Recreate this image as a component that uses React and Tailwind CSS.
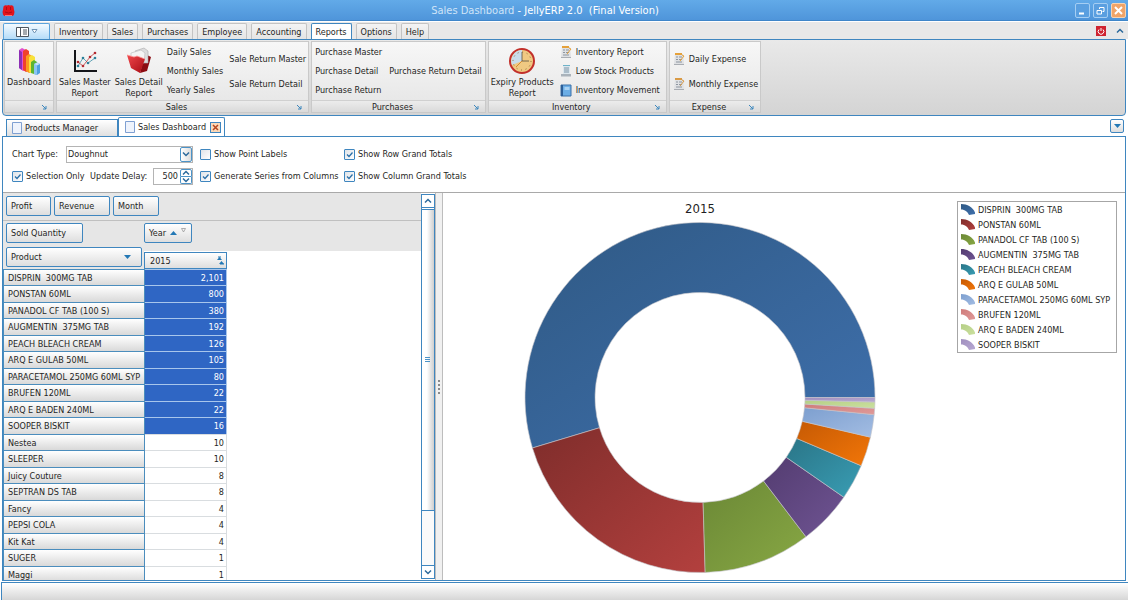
import { useState } from "react";
import clsx from "clsx";

const ribbonTabs = ["Inventory", "Sales", "Purchases", "Employee", "Accounting", "Reports", "Options", "Help"];

const products = [
    { name: "DISPRIN  300MG TAB", qty: 2101, from: "#2f5984", to: "#3f70ad" },
    { name: "PONSTAN 60ML", qty: 800, from: "#7f2d2b", to: "#b3403e" },
    { name: "PANADOL CF TAB (100 S)", qty: 380, from: "#6b8836", to: "#88a844" },
    { name: "AUGMENTIN  375MG TAB", qty: 192, from: "#533c70", to: "#6f5493" },
    { name: "PEACH BLEACH CREAM", qty: 126, from: "#2a7587", to: "#399db4" },
    { name: "ARQ E GULAB 50ML", qty: 105, from: "#c65a04", to: "#f27608" },
    { name: "PARACETAMOL 250MG 60ML SYP", qty: 80, from: "#7d9fcf", to: "#a3bde3" },
    { name: "BRUFEN 120ML", qty: 22, from: "#cf7c7b", to: "#e09a99" },
    { name: "ARQ E BADEN 240ML", qty: 22, from: "#b5cf86", to: "#cbe09f" },
    { name: "SOOPER BISKIT", qty: 16, from: "#a08fbf", to: "#b8a9d2" },
];

const otherProducts = [
    { name: "Nestea", qty: 10 },
    { name: "SLEEPER", qty: 10 },
    { name: "Juicy Couture", qty: 8 },
    { name: "SEPTRAN DS TAB", qty: 8 },
    { name: "Fancy", qty: 4 },
    { name: "PEPSI COLA", qty: 4 },
    { name: "Kit Kat", qty: 4 },
    { name: "SUGER", qty: 1 },
    { name: "Maggi", qty: 1 },
];

/* ---------- icons ---------- */

function JellyIcon() {
    return (
        <svg width="13" height="13" viewBox="0 0 13 13">
            <path d="M1.500 2.500 Q3 .5 5 1.500 Q6.500 .5 8 1.500 Q10 .5 11.500 2.500 L12 6 Q13 8 12 10.500 Q11 12.500 9 12 H4 Q2 12.500 1 10.500 Q0 8 1 6 Z" fill="#e3141c" />
            <path d="M4.500 3 V6 M8.500 3 V6 M3 8 Q6.500 10 10 8" stroke="#b00b14" fill="none" />
            <path d="M3 11.500 H10" stroke="#ff7474" />
        </svg>
    );
}

function DashboardIcon() {
    return (
        <svg width="24" height="28" viewBox="0 0 24 28">
            <path d="M2 3 L5 1 L9 3 L9 23 L6 24 L2 21 Z" fill="#e04fd0" />
            <path d="M2 3 L5 5 L5 23 L2 21 Z" fill="#8d2fb5" />
            <path d="M6 4 L9 2 L12 4 V24 L9 25 L6 23 Z" fill="#f0412c" />
            <path d="M9 9 L12 7 L15 9 V25 L12 26 L9 24 Z" fill="#fb9a1e" />
            <path d="M12 10 L15 8 L18 10 V26 L14 26 L12 25 Z" fill="#f8e13a" />
            <path d="M14 15 L17 13 L20 15 V26 L17 27 L14 26 Z" fill="#5cb531" />
            <path d="M17 17 L20 15.500 L23 17 V26 L20 28 L17 27 Z" fill="#4f9fe0" />
            <path d="M17 17 L20 18.500 V28 L17 27 Z" fill="#8cc6f2" />
            <path d="M17 17 L20 15.500 L23 17 L20 18.500 Z" fill="#c5e3fa" />
        </svg>
    );
}

function LineChartIcon() {
    return (
        <svg width="26" height="26" viewBox="0 0 26 26" fill="none">
            <path d="M3 2 V23 H25" stroke="#15161a" strokeWidth="2" />
            <path d="M6 18 L11 10 L16 15 L23 10" stroke="#3d8fa6" strokeWidth=".8" />
            <path d="M6 14 L11 18 L18 9 L23 5" stroke="#c0393b" strokeWidth=".8" />
            <g fill="#2a8099">
                <circle cx="6" cy="18" r="1.300" /><circle cx="11" cy="10" r="1.300" /><circle cx="16" cy="15" r="1.300" /><circle cx="23" cy="10" r="1.300" />
            </g>
            <g fill="#b52a30">
                <circle cx="6" cy="14" r="1.300" /><circle cx="11" cy="18" r="1.300" /><circle cx="18" cy="9" r="1.300" /><circle cx="23" cy="5" r="1.300" />
            </g>
        </svg>
    );
}

function FolderIcon() {
    return (
        <svg width="28" height="28" viewBox="0 0 28 28">
            <defs>
                <linearGradient id="folder" x1="0" y1="0" x2="1" y2="1">
                    <stop offset="0" stopColor="#f0484c" />
                    <stop offset="1" stopColor="#a80c14" />
                </linearGradient>
            </defs>
            <path d="M20 7 L26 10 L22 24 L15 26 Z" fill="#8c0b12" />
            <path d="M10 4 L19 1 L23 4 L23 16 L18 16 Z" fill="#dcdcdd" stroke="#a9a9ab" strokeWidth=".6" />
            <path d="M6 6 L16 3 L20 6 L19 16 L6 12 Z" fill="#f4f4f4" stroke="#b9b9bb" strokeWidth=".6" />
            <path d="M2 8 L9 10 L12 9 L20 12 L15 26 L6 21 Z" fill="url(#folder)" />
            <path d="M2 8 L9 10 L12 9 L20 12" stroke="#ff9a9a" strokeWidth=".8" fill="none" />
        </svg>
    );
}

function ClockIcon() {
    return (
        <svg width="28" height="28" viewBox="0 0 28 28">
            <circle cx="14" cy="14" r="12" fill="#f0c982" stroke="#c2302b" strokeWidth="2" />
            <path d="M14 14 V3 A11 11 0 0 0 4 18 Z" fill="#c9dcea" />
            <circle cx="14" cy="14" r="9" fill="none" stroke="#8c6a3a" strokeDasharray="1 3.700" />
            <path d="M14 5 V14 H21" stroke="#59503f" strokeWidth=".8" fill="none" />
            <path d="M14 14 L8 20" stroke="#d98a2b" />
        </svg>
    );
}

function ReportIcon({ color = "#e5a13a" }) {
    return (
        <svg width="12" height="13" viewBox="0 0 12 13">
            <path d="M2 2 H10 L11 12 H1 Z" fill="#dfe1e4" />
            <path d="M2 1 H9 V3 H2 Z" fill={color} />
            <path d="M3 5 H5 M6 5 H9 M3 7.500 H5 M6 7.500 H9 M3 10 H9" stroke="#8d959f" />
            <path d="M9 3 L11 4 L7 9" stroke={color} fill="none" />
            <path d="M1 12.500 H11" stroke="#a9adb3" />
        </svg>
    );
}

function StockIcon() {
    return (
        <svg width="12" height="13" viewBox="0 0 12 13">
            <path d="M3 1 H10 V10 H3 Z" fill="#dce7ee" />
            <path d="M3 1.500 H10" stroke="#6fb3c9" />
            <path d="M4 4 H9 M4 6 H9 M4 8 H9" stroke="#7c93a5" />
            <path d="M1 10 H11 V12.500 H1 Z" fill="#aab3bb" />
        </svg>
    );
}

function BookIcon() {
    return (
        <svg width="12" height="13" viewBox="0 0 12 13">
            <path d="M1 1 H11 V12 H1 Z" fill="#6caee6" stroke="#3a70a8" />
            <path d="M1 1 H3 V12 H1 Z" fill="#2d5f98" />
            <path d="M4.500 3 H9.500 V6 H4.500 Z" fill="#a9d2f3" />
        </svg>
    );
}

function PageIcon() {
    return (
        <svg width="10" height="12" viewBox="0 0 10 12">
            <path d="M.5 .5 H9.500 V11.500 H.5 Z" fill="#eef3fc" stroke="#7fa0d2" />
        </svg>
    );
}

function Chevron({ up = false }) {
    return (
        <svg width="8" height="6" viewBox="0 0 8 6" className="shrink-0">
            <path d={up ? "M1 4.500 L4 1.500 L7 4.500" : "M1 1.500 L4 4.500 L7 1.500"} stroke="#2c6a9c" strokeWidth="1.500" fill="none" />
        </svg>
    );
}

function Triangle({ up = false }) {
    return (
        <svg width="7" height="4" viewBox="0 0 7 4" className="shrink-0">
            <path d={up ? "M0 4 L3.500 0 L7 4 Z" : "M0 0 L3.500 4 L7 0 Z"} fill="#2378b5" />
        </svg>
    );
}

/* ---------- ribbon ---------- */

function RibbonGroup({ title, className, children }) {
    return (
        <section className="flex flex-col shrink-0 border border-[#c9c9c9] bg-linear-to-b from-[#f7f7f7] to-[#e5e5e5]">
            <div className={clsx("flex h-[58px]", className)}>{children}</div>
            <div className="flex h-3 items-center border-t border-[#d0d0d0] bg-linear-to-b from-[#ececec] to-[#dadada]">
                <h2 className="flex-1 text-center">{title}</h2>
                <button aria-label="More options" className="w-3">
                    <svg width="6" height="6" viewBox="0 0 6 6">
                        <path d="M1 1 L5 5 M5 2 V5 H2" stroke="#3b86bd" fill="none" />
                    </svg>
                </button>
            </div>
        </section>
    );
}

function LargeButton({ icon, children }) {
    return (
        <button className="flex flex-col items-center pt-[3px]">
            <span className="flex h-8 items-center">{icon}</span>
            <span className="leading-[11px] whitespace-pre-line">{children}</span>
        </button>
    );
}

function SmallButton({ icon, children }) {
    return (
        <button className="flex items-center gap-1 text-left whitespace-nowrap">
            {icon}
            {children}
        </button>
    );
}

function Ribbon() {
    return (
        <div className="flex gap-0.5 h-[77px] mx-0.5 px-px pt-px pb-0.5 border border-[#3f86bf] rounded-b-sm bg-linear-to-b from-[#e9e9e9] to-[#d4d4d4]">
            <RibbonGroup className="px-0.5">
                <LargeButton icon={<DashboardIcon />}>Dashboard</LargeButton>
            </RibbonGroup>

            <RibbonGroup title="Sales" className="px-0.5 gap-1">
                <LargeButton icon={<LineChartIcon />}>{"Sales Master\nReport"}</LargeButton>
                <LargeButton icon={<FolderIcon />}>{"Sales Detail\nReport"}</LargeButton>
                <div className="grid grid-rows-3">
                    <SmallButton>Daily Sales</SmallButton>
                    <SmallButton>Monthly Sales</SmallButton>
                    <SmallButton>Yearly Sales</SmallButton>
                </div>
                <div className="grid grid-rows-2 py-1 pl-0.5">
                    <SmallButton>Sale Return Master</SmallButton>
                    <SmallButton>Sale Return Detail</SmallButton>
                </div>
            </RibbonGroup>

            <RibbonGroup title="Purchases" className="px-[3px] gap-[7px]">
                <div className="grid grid-rows-3">
                    <SmallButton>Purchase Master</SmallButton>
                    <SmallButton>Purchase Detail</SmallButton>
                    <SmallButton>Purchase Return</SmallButton>
                </div>
                <div className="flex items-center">
                    <SmallButton>Purchase Return Detail</SmallButton>
                </div>
            </RibbonGroup>

            <RibbonGroup title="Inventory" className="pl-0.5 pr-1.5 gap-1.5">
                <LargeButton icon={<ClockIcon />}>{"Expiry Products\nReport"}</LargeButton>
                <div className="grid grid-rows-3">
                    <SmallButton icon={<ReportIcon />}>Inventory Report</SmallButton>
                    <SmallButton icon={<StockIcon />}>Low Stock Products</SmallButton>
                    <SmallButton icon={<BookIcon />}>Inventory Movement</SmallButton>
                </div>
            </RibbonGroup>

            <RibbonGroup title="Expense" className="pl-[3px] pr-0.5">
                <div className="grid grid-rows-2 py-1">
                    <SmallButton icon={<ReportIcon />}>Daily Expense</SmallButton>
                    <SmallButton icon={<ReportIcon color="#d99a45" />}>Monthly Expense</SmallButton>
                </div>
            </RibbonGroup>
        </div>
    );
}

/* ---------- options ---------- */

function CheckOption({ label, defaultChecked }) {
    return (
        <label className="flex items-center gap-[3px] whitespace-nowrap">
            <span className="grid shrink-0">
                <input
                    type="checkbox"
                    defaultChecked={defaultChecked}
                    className="peer col-start-1 row-start-1 appearance-none size-[11px] border border-[#3f86bf] rounded-[1px] bg-linear-to-br from-[#dfe3e8] to-white"
                />
                <svg viewBox="0 0 11 11" className="col-start-1 row-start-1 size-[11px] pointer-events-none invisible peer-checked:visible">
                    <path d="M3 5.500 L5 7.500 L8.500 3.500" stroke="#2a6fa8" strokeWidth="1.300" fill="none" />
                </svg>
            </span>
            {label}
        </label>
    );
}

function Options() {

    const [delay, setDelay] = useState(500);

    return (
        <div className="grid shrink-0 grid-cols-[188px_144px_auto] auto-rows-[22px] items-center justify-start pl-[9px] pt-1.5 pb-[5px] border-b border-[#a9a9a9]">
            <div className="flex items-center justify-between pr-[7px]">
                <label htmlFor="chart-type">Chart Type:</label>
                <div className="flex h-[17px] w-[127px] border border-[#b4b4b4]">
                    <select id="chart-type" className="appearance-none flex-1 pl-px bg-white outline-none">
                        <option>Doughnut</option>
                        <option>Pie</option>
                        <option>Bar</option>
                    </select>
                    <span className="flex w-3 items-center justify-center border border-[#4b93c8] rounded-xs bg-linear-to-r from-white to-[#dcdcdc] pointer-events-none">
                        <Chevron />
                    </span>
                </div>
            </div>
            <CheckOption label="Show Point Labels" />
            <CheckOption label="Show Row Grand Totals" defaultChecked />

            <div className="flex items-center justify-between pr-[7px]">
                <CheckOption label="Selection Only" defaultChecked />
                <label htmlFor="delay">Update Delay:</label>
                <div className="flex h-[17px] w-10 border border-[#b4b4b4]">
                    <input
                        id="delay"
                        value={delay}
                        onChange={(e) => setDelay(Number(e.target.value) || 0)}
                        className="w-0 flex-1 pr-0.5 text-right outline-none"
                    />
                    <div className="flex flex-col w-3">
                        <button aria-label="Increase" onClick={() => setDelay(delay + 100)} className="flex flex-1 items-center justify-center border border-[#4b93c8] rounded-t-xs">
                            <Chevron up />
                        </button>
                        <button aria-label="Decrease" onClick={() => setDelay(delay - 100)} className="flex flex-1 items-center justify-center border border-t-0 border-[#4b93c8] rounded-b-xs">
                            <Chevron />
                        </button>
                    </div>
                </div>
            </div>
            <CheckOption label="Generate Series from Columns" defaultChecked />
            <CheckOption label="Show Column Grand Totals" defaultChecked />
        </div>
    );
}

/* ---------- pivot grid ---------- */

function FieldButton({ className, children }) {
    return (
        <button className={clsx("flex h-5 items-center pl-1 border border-[#3f86bf] rounded-xs bg-linear-to-b from-white to-[#dedede]", className)}>
            {children}
        </button>
    );
}

function PivotGrid() {

    const rows = [...products, ...otherProducts];

    return (
        <div className="flex flex-1 min-w-0 flex-col overflow-hidden">
            <div className="flex shrink-0 gap-[3px] pt-[3px] pb-1 pl-[3px] bg-[#e6e6e6] border-b border-[#c0c0c0]">
                <FieldButton className="w-[45px]">Profit</FieldButton>
                <FieldButton className="w-14">Revenue</FieldButton>
                <FieldButton className="w-[46px]">Month</FieldButton>
            </div>

            <div className="flex shrink-0 bg-[#e6e6e6]">
                <div className="w-[141px] py-0.5 pl-[3px] pr-0.5">
                    <FieldButton className="w-[77px]">Sold Quantity</FieldButton>
                    <FieldButton className="w-full mt-1 justify-between pr-2.5">
                        Product
                        <Triangle />
                    </FieldButton>
                </div>
                <div className="flex flex-1 flex-col pt-0.5">
                    <FieldButton className="w-12 gap-1">
                        Year
                        <Triangle up />
                        <svg width="5" height="10" viewBox="0 0 5 10">
                            <path d="M.5 .5 H4.500 L2.500 4 Z" fill="none" stroke="#9a9a9a" strokeWidth=".8" />
                        </svg>
                    </FieldButton>
                    <div className="flex-1 flex items-end mt-2 bg-white">
                        <button className="flex w-[83px] h-[17px] items-center justify-between pl-[5px] pr-0.5 border border-[#3f86bf] bg-linear-to-b from-white to-[#dedede]">
                            2015
                            <svg width="7" height="9" viewBox="0 0 7 9">
                                <path d="M0 4 L2.500 1 L5 4 Z M2 8 L4.500 5 L7 8 Z" fill="#2378b5" />
                                <path d="M1 1 H4 M3 8 H7" stroke="#2378b5" />
                            </svg>
                        </button>
                    </div>
                </div>
            </div>

            <div className="flex-1 min-h-0 overflow-hidden">
                <table className="w-56 table-fixed border-separate border-spacing-0">
                    <tbody>
                        {rows.map((row, i) => (
                            <tr key={row.name} className="h-4 even:h-[17px]">
                                <th scope="row" className="w-[142px] p-0 pl-1 border-x border-t border-[#4b8dbd] bg-linear-to-b from-white to-[#d9d9d9] text-left font-normal whitespace-pre">
                                    {row.name}
                                </th>
                                <td
                                    className={clsx(
                                        "p-0 pr-0.5 border-t border-r text-right",
                                        i < products.length
                                            ? "bg-[#2f66c4] border-[#a8c6ec] text-white"
                                            : "border-[#d9dde0]"
                                    )}
                                >
                                    {row.qty.toLocaleString("en-US")}
                                </td>
                            </tr>
                        ))}
                    </tbody>
                </table>
            </div>
        </div>
    );
}

function ScrollBar() {
    return (
        <div className="flex shrink-0 flex-col w-3.5 my-px border border-[#3f86bf]">
            <button aria-label="Scroll up" className="flex h-[13px] items-center justify-center border-b border-[#3f86bf]">
                <Chevron up />
            </button>
            <div className="flex flex-11 items-center justify-center mt-px border-y border-[#3f86bf] bg-linear-to-r from-white from-40% to-[#cfcfcf]">
                <svg width="5" height="5" viewBox="0 0 5 5">
                    <path d="M0 .5 H5 M0 2.500 H5 M0 4.500 H5" stroke="#4b93c8" />
                </svg>
            </div>
            <div className="flex-2 bg-[#fafafa]" />
            <button aria-label="Scroll down" className="flex h-[13px] items-center justify-center border-t border-[#3f86bf]">
                <Chevron />
            </button>
        </div>
    );
}

/* ---------- chart ---------- */

const OUTER = 175;
const INNER = 105;

function point(radius, angle) {
    return `${radius * Math.cos(angle)} ${-radius * Math.sin(angle)}`;
}

function slicePath(start, end) {
    const large = end - start > Math.PI ? 1 : 0;
    return `M${point(OUTER, start)} A${OUTER} ${OUTER} 0 ${large} 0 ${point(OUTER, end)} L${point(INNER, end)} A${INNER} ${INNER} 0 ${large} 1 ${point(INNER, start)} Z`;
}

function Doughnut() {

    const total = products.reduce((sum, p) => sum + p.qty, 0);
    let angle = 0;

    const slices = products.map((p, i) => {
        const start = angle;
        angle += (p.qty / total) * Math.PI * 2;
        return { ...p, id: `slice-${i}`, d: slicePath(start, angle) };
    });

    return (
        <svg viewBox="-175.500 -175.500 351 351" className="flex-1 min-h-0 w-full" role="img" aria-label="Sold quantity by product, 2015">
            <defs>
                {slices.map((s) => (
                    <linearGradient key={s.id} id={s.id} x1="0" y1="0" x2="1" y2="1">
                        <stop offset="0" stopColor={s.from} />
                        <stop offset="1" stopColor={s.to} />
                    </linearGradient>
                ))}
            </defs>
            {slices.map((s) => (
                <path key={s.id} d={s.d} fill={`url(#${s.id})`} stroke="#c4c4ca" strokeWidth=".6" />
            ))}
        </svg>
    );
}

function Legend() {
    return (
        <ul className="shrink-0 self-start w-40 mt-2 mr-2 px-[3px] border border-[#a6a6a6]">
            {products.map((p, i) => (
                <li key={p.name} className="flex h-[15px] items-center gap-[3px] whitespace-pre">
                    <svg width="14" height="11" viewBox="0 0 14 11">
                        <path d="M0 0 C7 0 13 4 14.500 10 L8 11 C7 8 4 5.500 0 5.500 Z" fill={`url(#slice-${i})`} />
                    </svg>
                    {p.name}
                </li>
            ))}
        </ul>
    );
}

/* ---------- window ---------- */

export default function App() {

    const [activeTab, setActiveTab] = useState("Reports");

    return (
        <div className="flex h-screen flex-col overflow-hidden bg-white font-['DejaVu_Sans_Condensed','DejaVu_Sans',sans-serif] text-[9px] leading-3 text-[#1f1f24]">

            <header className="flex shrink-0 h-[21px] items-center px-0.5 border-b border-[#3f86c9] bg-linear-to-b from-[#62aae8] to-[#4f95da]">
                <JellyIcon />
                <h1 className="flex-1 pt-0.5 text-center text-[11px] text-white whitespace-pre">
                    <span className="text-[#cfe4f8]">Sales Dashboard</span> - JellyERP 2.0  (Final Version)
                </h1>
                <div className="flex gap-[3px] text-white">
                    <button aria-label="Minimize" className="flex size-[15px] items-center justify-center border border-[#a5cef3] rounded-xs bg-[#5a9fe0]">
                        <svg width="9" height="9" viewBox="0 0 9 9"><path d="M1 7.500 H6" stroke="currentColor" strokeWidth="2" /></svg>
                    </button>
                    <button aria-label="Restore" className="flex size-[15px] items-center justify-center border border-[#a5cef3] rounded-xs bg-[#5a9fe0]">
                        <svg width="9" height="9" viewBox="0 0 9 9" fill="none" stroke="currentColor"><path d="M3.500 3 V1.500 H8 V5.500 H6.500 M1 4.500 H5.500 V8 H1 Z" /></svg>
                    </button>
                    <button aria-label="Close" className="flex size-[15px] items-center justify-center border border-[#f8d3b0] rounded-xs bg-[#f0a468]">
                        <svg width="11" height="11" viewBox="0 0 11 11"><path d="M2 2 L9 9 M9 2 L2 9" stroke="currentColor" strokeWidth="2" /></svg>
                    </button>
                </div>
            </header>

            <nav className="flex shrink-0 h-[17px] items-end gap-1 mt-px px-[3px] bg-[#e8e8e8]">
                <button aria-label="Application menu" className="flex w-[47px] h-4 items-center justify-center gap-0.5 border border-b-0 border-[#5ba3dc] rounded-t-xs bg-linear-to-b from-[#f3faff] to-[#b5dcf8]">
                    <svg width="13" height="10" viewBox="0 0 13 10" fill="none" stroke="#4d5660">
                        <path d="M.5 .5 H12.500 V9.500 H.5 Z" fill="#fff" />
                        <path d="M4.500 .5 V9.500 M7 3 H11 M7 5 H11 M7 7 H11" />
                    </svg>
                    <svg width="7" height="5" viewBox="0 0 7 5"><path d="M1 .5 H6 L3.500 4 Z" fill="#fff" stroke="#6d93b4" /></svg>
                </button>
                {ribbonTabs.map((tab) => (
                    <button
                        key={tab}
                        onClick={() => setActiveTab(tab)}
                        className={clsx(
                            "h-4 px-1 border border-b-0 rounded-t-xs",
                            tab === activeTab
                                ? "border-[#3f86bf] bg-white"
                                : "border-[#c3c3c3] bg-linear-to-b from-[#f4f4f4] to-[#e4e4e4]"
                        )}
                    >
                        {tab}
                    </button>
                ))}
                <div className="flex flex-1 h-4 items-center justify-end gap-2.5 pr-px">
                    <button aria-label="Exit">
                        <svg width="10" height="10" viewBox="0 0 10 10">
                            <path d="M0 0 H10 V10 H0 Z" fill="#cf2430" />
                            <path d="M3 3.500 A2.800 2.800 0 1 0 7 3.500 M5 2 V5" stroke="#fff" fill="none" />
                        </svg>
                    </button>
                    <button aria-label="Collapse ribbon"><Chevron up /></button>
                </div>
            </nav>

            <div className="shrink-0">
                <Ribbon />
            </div>

            <div className="flex shrink-0 h-5 items-end pl-1.5 pr-1">
                <button className="flex w-28 h-[17px] items-center gap-[3px] pl-[5px] border border-b-0 border-[#3f86bf] bg-linear-to-b from-white to-[#e0e0e0]">
                    <PageIcon />
                    Products Manager
                </button>
                <div className="flex w-[107px] h-[19px] items-center gap-[3px] pl-1.5 border border-b-0 border-[#3f86bf] rounded-t-xs bg-white">
                    <PageIcon />
                    <button>Sales Dashboard</button>
                    <button aria-label="Close tab" className="ml-px border border-[#3f86bf] bg-[#fbd9b8]">
                        <svg width="9" height="9" viewBox="0 0 9 9"><path d="M2 2 L7 7 M7 2 L2 7" stroke="#b5451e" strokeWidth="1.500" /></svg>
                    </button>
                </div>
                <button aria-label="Tab list" className="flex size-3.5 items-center justify-center self-center ml-auto border border-[#3f86bf] rounded-xs bg-linear-to-b from-white to-[#dedede]">
                    <Triangle />
                </button>
            </div>

            <main className="flex flex-1 min-h-0 flex-col mx-0.5 border border-[#3f86bf]">
                <Options />
                <div className="flex flex-1 min-h-0">
                    <div className="flex w-[38.500%] shrink-0">
                        <PivotGrid />
                        <ScrollBar />
                    </div>
                    <div className="flex shrink-0 w-2 items-center justify-center border-x border-[#bdbdbd] bg-[#f0f0f0]">
                        <svg width="2" height="14" viewBox="0 0 2 14"><path d="M1 0 V14" stroke="#8a8a8a" strokeWidth="2" strokeDasharray="2 2" /></svg>
                    </div>
                    <div className="flex flex-1 min-w-0">
                        <figure className="flex flex-1 min-w-0 flex-col pb-[7px]">
                            <figcaption className="h-[29px] pt-2 text-center text-[13px] leading-4">2015</figcaption>
                            <Doughnut />
                        </figure>
                        <Legend />
                    </div>
                </div>
            </main>

            <footer className="shrink-0 h-[18px] mt-px ml-px border-t border-l border-[#3f86bf] bg-linear-to-b from-white to-[#d6d6d6]" />
        </div>
    );
}
